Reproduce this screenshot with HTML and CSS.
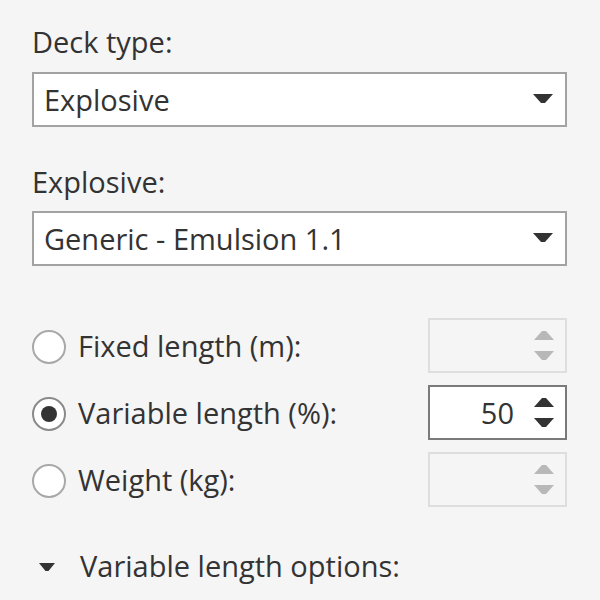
FILE: index.html
```html
<!DOCTYPE html>
<html>
<head>
<meta charset="utf-8">
<link rel="stylesheet" href="styles.css">
</head>
<body>
<div class="panel">
  <div class="label first">Deck type:</div>
  <div class="select">
    <span class="select-text">Explosive</span>
    <svg class="caret" width="20" height="11" viewBox="0 0 20 11"><path d="M0 0 H20 L12 9 H8 Z" fill="#333"/></svg>
  </div>
  <div class="label second">Explosive:</div>
  <div class="select">
    <span class="select-text">Generic - Emulsion 1.1</span>
    <svg class="caret" width="20" height="11" viewBox="0 0 20 11"><path d="M0 0 H20 L12 9 H8 Z" fill="#333"/></svg>
  </div>

  <div class="rows">
    <div class="row">
      <span class="radio"></span>
      <span class="row-label">Fixed length (m):</span>
      <div class="spin disabled">
        <span class="spin-value"></span>
        <span class="arrows">
          <svg width="20" height="10" viewBox="0 0 20 10"><path d="M0 10 L8 1 H12 L20 10 Z"/></svg>
          <svg width="20" height="10" viewBox="0 0 20 10"><path d="M0 0 H20 L12 9 H8 Z"/></svg>
        </span>
      </div>
    </div>
    <div class="row">
      <span class="radio checked"></span>
      <span class="row-label">Variable length (%):</span>
      <div class="spin">
        <span class="spin-value">50</span>
        <span class="arrows">
          <svg width="20" height="10" viewBox="0 0 20 10"><path d="M0 10 L8 1 H12 L20 10 Z"/></svg>
          <svg width="20" height="10" viewBox="0 0 20 10"><path d="M0 0 H20 L12 9 H8 Z"/></svg>
        </span>
      </div>
    </div>
    <div class="row">
      <span class="radio"></span>
      <span class="row-label">Weight (kg):</span>
      <div class="spin disabled">
        <span class="spin-value"></span>
        <span class="arrows">
          <svg width="20" height="10" viewBox="0 0 20 10"><path d="M0 10 L8 1 H12 L20 10 Z"/></svg>
          <svg width="20" height="10" viewBox="0 0 20 10"><path d="M0 0 H20 L12 9 H8 Z"/></svg>
        </span>
      </div>
    </div>
  </div>

  <div class="expander">
    <svg class="exp-caret" width="16" height="9" viewBox="0 0 16 9"><path d="M0 0 H16 L9.5 8 H6.5 Z" fill="#333"/></svg>
    <span class="exp-label">Variable length options:</span>
  </div>
</div>
</body>
</html>
```

FILE: styles.css
```css
html, body {
  margin: 0;
  padding: 0;
  background: #f5f5f5;
}
body {
  font-family: "Open Sans", "Noto Sans", sans-serif;
  font-size: 29px;
  color: #333;
  width: 600px;
  height: 600px;
  overflow: hidden;
}
.panel {
  padding: 24px 33px 0 32px;
  display: flex;
  flex-direction: column;
}
.label {
  line-height: 36px;
  height: 36px;
}
.label.first { margin-bottom: 12px; }
.label.second { margin-top: 37px; margin-bottom: 11px; }
.select {
  box-sizing: border-box;
  height: 55px;
  border: 2px solid #a3a3a3;
  background: #fff;
  display: flex;
  align-items: center;
  padding: 1px 12px 0 10px;
}
.select-text {
  flex: 1;
  line-height: 36px;
}
.caret { display: block; margin-top: -2px; }
.rows {
  margin-top: 52px;
  display: flex;
  flex-direction: column;
  gap: 12px;
}
.row {
  height: 55px;
  display: flex;
  align-items: center;
}
.radio {
  box-sizing: border-box;
  width: 34px;
  height: 34px;
  border-radius: 50%;
  border: 2px solid #a8a8a8;
  background: #fff;
  margin-right: 12px;
  display: flex;
  align-items: center;
  justify-content: center;
  margin-top: 2px;
}
.radio.checked { border-color: #8a8a8a; }
.radio.checked::after {
  content: "";
  width: 16px;
  height: 16px;
  border-radius: 50%;
  background: #333;
}
.row-label {
  flex: 1;
  line-height: 36px;
}
.spin {
  box-sizing: border-box;
  width: 139px;
  height: 55px;
  border: 2px solid #7a7a7a;
  background: #fff;
  display: flex;
  align-items: center;
  padding: 0 11px 0 8px;
}
.spin.disabled {
  border-color: #dedede;
  background: #f5f5f5;
}
.spin-value {
  flex: 1;
  text-align: right;
  padding-right: 20px;
  line-height: 36px;
  padding-top: 1px;
}
.arrows {
  display: flex;
  flex-direction: column;
  gap: 11px;
}
.arrows svg { display: block; fill: #333; }
.spin.disabled .arrows svg { fill: #b8b8b8; }
.expander {
  margin-top: 41px;
  display: flex;
  align-items: center;
  height: 36px;
}
.exp-caret { display: block; margin-left: 7px; margin-right: 25px; margin-top: 2px; }
.exp-label { line-height: 36px; }
```
